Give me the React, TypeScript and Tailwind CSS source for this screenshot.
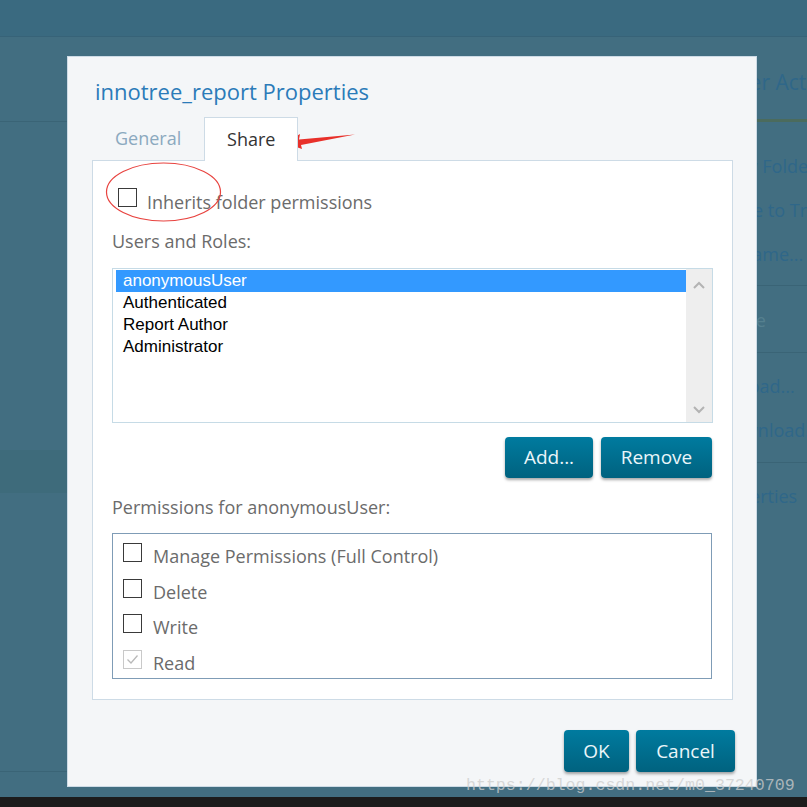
import React from "react";

const Box = ({ checked = false, disabled = false }: { checked?: boolean; disabled?: boolean }) => (
  <div
    className={
      "w-[19px] h-[19px] shrink-0 bg-white border flex items-center justify-center " +
      (disabled ? "border-[#c9c9c9]" : "border-[#3a3a3a]")
    }
  >
    {checked && (
      <svg width="15" height="15" viewBox="0 0 15 15">
        <path d="M2.5 7.5 L6 11 L12.5 3.5" fill="none" stroke="#b9b9b9" strokeWidth="1.3" />
      </svg>
    )}
  </div>
);

const Btn = ({ label, w }: { label: string; w: string }) => (
  <button
    className={
      w +
      " h-full rounded-[4px] bg-gradient-to-b from-[#007b9f] to-[#00627f] text-[#eaf6fa] text-[19px] shadow-[0_2px_3px_rgba(0,0,0,0.35)]"
    }
  >
    {label}
  </button>
);

export default function App() {
  const users = ["anonymousUser", "Authenticated", "Report Author", "Administrator"];
  const perms = [
    { t: "Manage Permissions (Full Control)" },
    { t: "Delete" },
    { t: "Write" },
    { t: "Read", c: true, d: true },
  ];
  return (
    <div
      className="relative w-[807px] h-[807px] overflow-hidden bg-[#426e81]"
      style={{ fontFamily: "'Open Sans', 'Noto Sans', sans-serif" }}
    >
      {/* background application */}
      <div className="flex flex-col h-full">
        <div className="h-[37px] bg-[#3a6a80] border-b border-[#376378]" />
        <div className="flex flex-1">
          <div className="flex-1 flex flex-col">
            <div className="h-[85px] border-b border-[#3a6476]" />
            <div className="h-[328px]" />
            <div className="h-[43px] bg-[#3e6b7b]" />
            <div className="h-[279px] border-b border-[#3a6476]" />
          </div>
          <div className="w-[91px] flex flex-col text-[#2f6789] text-[18px] whitespace-nowrap">
            <div className="h-[85px] border-b-[3px] border-[#4b6b5d] text-[21px] leading-[28px] pt-[31px] -ml-[8px]">
              Folder Actions
            </div>
            <div className="pt-[22px] pb-[9px] border-b border-[#3a6476]">
              <div className="h-[44px] leading-[44px] pl-[4px]">New Folder</div>
              <div className="h-[44px] leading-[44px] pl-[1px]">Move to Trash</div>
              <div className="h-[44px] leading-[44px] pl-[4px]">Rename...</div>
            </div>
            <div className="pt-[12px] pb-[10px] border-b border-[#3a6476] pl-[4px]">
              <div className="h-[44px] leading-[44px] text-[#55808f]">Paste</div>
            </div>
            <div className="pt-[11px] pb-[10px] border-b border-[#3a6476] pl-[4px]">
              <div className="h-[44px] leading-[44px]">Upload...</div>
              <div className="h-[44px] leading-[44px]">Download...</div>
            </div>
            <div className="pt-[11px] -ml-[6px]">
              <div className="h-[44px] leading-[44px]">Properties</div>
            </div>
          </div>
        </div>
        <div className="h-[10px] bg-[#1c1c1c]" />
      </div>

      {/* dialog */}
      <div className="absolute left-[67px] top-[56px] w-[690px] h-[731px] bg-[#f4f6f8] border border-[#cddbe6] pl-[24px] pr-[23px] pt-[20px] flex flex-col">
        <div className="ml-[3px] text-[22px] leading-[28px] text-[#2b7bb9]">innotree_report Properties</div>
        <div className="mt-[12px] flex items-end h-[43px] shrink-0">
          <div className="px-[23px] h-[43px] leading-[43px] text-[18px] text-[#8ba9bf]">General</div>
          <div className="relative z-10 -mb-px w-[94px] h-[44px] bg-white border border-b-0 border-[#cddbe6] text-center leading-[42px] text-[18px] text-[#333333]">
            Share
          </div>
        </div>
        <div className="h-[540px] shrink-0 bg-white border border-[#cddbe6] px-[19px] flex flex-col">
          <div className="mt-[26px] flex items-start h-[26px]">
            <div className="ml-[6px] mt-[1px]">
              <Box />
            </div>
            <div className="ml-[10px] mt-[2px] text-[18px] leading-[26px] text-[#6b6b6b]">Inherits folder permissions</div>
          </div>
          <div className="mt-[15px] text-[18px] leading-[26px] text-[#6b6b6b]">Users and Roles:</div>
          <div className="mt-[14px] h-[155px] shrink-0 border border-[#c6dbe6] flex">
            <div className="flex-1 pl-[3px] pt-[1px]" style={{ fontFamily: "'Liberation Sans', Arial, sans-serif" }}>
              {users.map((u, i) => (
                <div
                  key={u}
                  className={
                    "h-[22px] leading-[22px] pl-[7px] text-[17px] " +
                    (i === 0 ? "bg-[#3399ff] text-white" : "text-black")
                  }
                >
                  {u}
                </div>
              ))}
            </div>
            <div className="w-[26px] bg-[#eeeeee] flex flex-col items-center justify-between pt-[12px] pb-[8px]">
              <svg width="12" height="8" viewBox="0 0 12 8">
                <path d="M1 7 L6 2 L11 7" fill="none" stroke="#b3b3b3" strokeWidth="2" />
              </svg>
              <svg width="12" height="8" viewBox="0 0 12 8">
                <path d="M1 1 L6 6 L11 1" fill="none" stroke="#b3b3b3" strokeWidth="2" />
              </svg>
            </div>
          </div>
          <div className="mt-[14px] h-[41px] shrink-0 flex justify-end gap-[8px] pr-[1px]">
            <Btn label="Add..." w="w-[88px]" />
            <Btn label="Remove" w="w-[111px]" />
          </div>
          <div className="mt-[16px] text-[18px] leading-[26px] text-[#6b6b6b]">Permissions for anonymousUser:</div>
          <div className="mt-[13px] h-[146px] shrink-0 mr-[1px] border border-[#7f9cb6] pl-[10px] pt-[9px] flex flex-col">
            {perms.map((p) => (
              <div key={p.t} className="h-[35.5px] shrink-0 flex items-start">
                <Box checked={p.c} disabled={p.d} />
                <div className="ml-[11px] mt-[1px] text-[18px] leading-[24px] text-[#6b6b6b]">{p.t}</div>
              </div>
            ))}
          </div>
        </div>
        <div className="mt-[30px] h-[42px] shrink-0 flex justify-end gap-[7px] -mr-[2px]">
          <Btn label="OK" w="w-[65px]" />
          <Btn label="Cancel" w="w-[99px]" />
        </div>
      </div>

      {/* annotations */}
      <svg className="absolute left-0 top-0 pointer-events-none" width="807" height="807" viewBox="0 0 807 807">
        <ellipse cx="163.5" cy="192" rx="57" ry="29" fill="none" stroke="#e8433f" strokeWidth="1.2" />
        <polygon points="285,143 300,134 299,139.5 355,134.5 301,145 302,149" fill="#e8302a" />
      </svg>

      {/* watermark */}
      <div
        className="absolute left-[466px] top-[776px] text-[16.6px] leading-[20px] text-[rgba(205,205,205,0.75)] whitespace-nowrap"
        style={{ fontFamily: "'Liberation Mono', 'DejaVu Sans Mono', monospace" }}
      >
        https://blog.csdn.net/m0_37240709
      </div>
    </div>
  );
}
